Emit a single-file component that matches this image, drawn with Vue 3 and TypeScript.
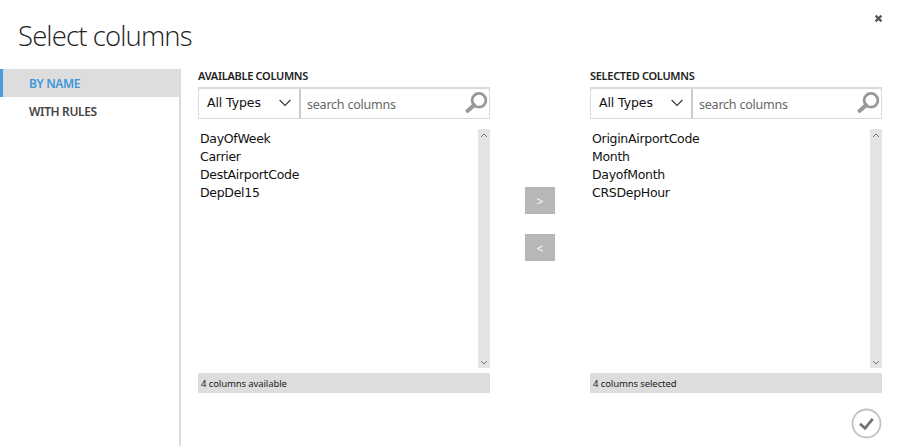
<script setup lang="ts">
import { ref } from 'vue'

interface Panel {
  id: string
  title: string
  columns: string[]
  status: string
}

const tabs: string[] = ['BY NAME', 'WITH RULES']
const activeTab = ref<string>('BY NAME')

const panels: Panel[] = [
  {
    id: 'available',
    title: 'AVAILABLE COLUMNS',
    columns: ['DayOfWeek', 'Carrier', 'DestAirportCode', 'DepDel15'],
    status: '4 columns available',
  },
  {
    id: 'selected',
    title: 'SELECTED COLUMNS',
    columns: ['OriginAirportCode', 'Month', 'DayofMonth', 'CRSDepHour'],
    status: '4 columns selected',
  },
]
</script>

<template>
  <div class="dialog">
    <header class="header">
      <h1 class="title">Select columns</h1>
      <button class="close" aria-label="Close">
        <svg width="9" height="9" viewBox="0 0 9 9"><path d="M1.6 1.6L7.4 7.4M7.4 1.6L1.6 7.4" stroke="#555" stroke-width="2.2" /></svg>
      </button>
    </header>
    <div class="body">
      <nav class="tabs">
        <button
          v-for="tab in tabs"
          :key="tab"
          class="tab"
          :class="{ active: tab === activeTab }"
          @click="activeTab = tab"
        >{{ tab }}</button>
      </nav>
      <main class="content">
        <section v-for="panel in panels" :key="panel.id" class="panel" :class="panel.id">
          <h2 class="heading"><span>{{ panel.title }}</span></h2>
          <div class="filter">
            <div class="select">
              <span>All Types</span>
              <svg width="12" height="8" viewBox="0 0 12 8"><path d="M0.6 1L6 6.4L11.4 1" fill="none" stroke="#333" stroke-width="1.1" /></svg>
            </div>
            <div class="search">
              <span>search columns</span>
              <svg width="23" height="22" viewBox="0 0 23 22">
                <circle cx="14" cy="8.3" r="6.9" fill="none" stroke="#999" stroke-width="2.8" />
                <path d="M9 13.2L2.7 18.8" stroke="#999" stroke-width="4.2" stroke-linecap="round" />
              </svg>
            </div>
          </div>
          <div class="list">
            <ul class="items">
              <li v-for="column in panel.columns" :key="column">{{ column }}</li>
            </ul>
            <div class="scrollbar">
              <svg width="8" height="5" viewBox="0 0 8 5"><path d="M1 4L4 1L7 4" fill="none" stroke="#777" stroke-width="1" /></svg>
              <svg width="8" height="5" viewBox="0 0 8 5"><path d="M1 1L4 4L7 1" fill="none" stroke="#777" stroke-width="1" /></svg>
            </div>
          </div>
          <div class="status"><span>{{ panel.status }}</span></div>
        </section>
        <div class="movers">
          <button class="mover">&gt;</button>
          <button class="mover">&lt;</button>
        </div>
      </main>
    </div>
    <button class="confirm" aria-label="Confirm">
      <svg width="31" height="31" viewBox="0 0 31 31">
        <circle cx="15.5" cy="15.5" r="14" fill="#fff" stroke="#c3c3c3" stroke-width="1.8" />
        <path d="M9 15.8L14 20.3L21.7 10.8" fill="none" stroke="#707070" stroke-width="2.7" />
      </svg>
    </button>
  </div>
</template>

<style>
body {
  margin: 0;
  background: #fff;
}
</style>

<style scoped>
.dialog {
  position: relative;
  display: flex;
  flex-direction: column;
  width: 897px;
  height: 446px;
  overflow: hidden;
  background: #fff;
  color: #222;
  font-family: "Noto Sans", "Open Sans", sans-serif;
}
button {
  margin: 0;
  padding: 0;
  border: 0;
  background: none;
  font: inherit;
}
svg {
  display: block;
  flex: none;
}
.header {
  display: flex;
  justify-content: space-between;
  height: 69px;
  box-sizing: border-box;
  padding: 14px 14px 0 18px;
}
.title {
  margin: 0;
  font-family: "Open Sans", sans-serif;
  font-size: 27.5px;
  line-height: 43px;
  font-weight: 300;
  letter-spacing: -0.87px;
  white-space: nowrap;
}
.close {
  align-self: flex-start;
}
.body {
  display: flex;
  flex: 1;
}
.tabs {
  display: flex;
  flex-direction: column;
  width: 181px;
  box-sizing: border-box;
  border-right: 2px solid #dcdcdc;
}
.tab {
  height: 28px;
  padding-left: 29px;
  color: #444;
  font-size: 12px;
  line-height: 30px;
  font-weight: 600;
  letter-spacing: -0.36px;
  text-align: left;
}
.tab.active {
  padding-left: 26px;
  border-left: 3px solid #4a9bdc;
  background: #ddd;
  color: #3f95dc;
}
.content {
  display: grid;
  grid-template-columns: 292px 100px 292px;
  padding-left: 17px;
}
.panel {
  grid-row: 1;
  display: flex;
  flex-direction: column;
  height: 325px;
}
.available {
  grid-column: 1;
}
.selected {
  grid-column: 3;
}
.heading {
  height: 18px;
  margin: 0;
  font-size: 11px;
  line-height: 13px;
  font-weight: 600;
  letter-spacing: -0.3px;
  white-space: nowrap;
}
.filter {
  display: flex;
  height: 32px;
  box-sizing: border-box;
  border: solid #d9d9d9;
  border-width: 2px 1px 1px;
}
.select {
  display: flex;
  align-items: center;
  justify-content: space-between;
  width: 102px;
  box-sizing: border-box;
  padding: 0 8px 2px 8px;
  border-right: 2px solid #ccc;
  color: #111;
  font-family: "DejaVu Sans", sans-serif;
  font-size: 12.5px;
  letter-spacing: -0.1px;
}
.search {
  display: flex;
  flex: 1;
  align-items: center;
  justify-content: space-between;
  padding: 0 1px 1px 6px;
  color: #666;
  font-size: 12.5px;
  letter-spacing: -0.22px;
}
.search span {
  padding-top: 2px;
}
.list {
  display: flex;
  justify-content: space-between;
  height: 239px;
  margin-top: 10px;
}
.items {
  margin: 0;
  padding: 1px 0 0 2px;
  list-style: none;
  color: #111;
  font-family: "DejaVu Sans", sans-serif;
  font-size: 12.5px;
  line-height: 18px;
  letter-spacing: -0.3px;
}
.scrollbar {
  display: flex;
  flex-direction: column;
  align-items: center;
  justify-content: space-between;
  width: 12px;
  box-sizing: border-box;
  padding: 4px 0 3px;
  background: #e4e4e4;
}
.status {
  height: 20px;
  margin-top: 5px;
  padding-left: 3px;
  background: #ddd;
  font-size: 9.5px;
  line-height: 22px;
  letter-spacing: -0.1px;
}
.movers {
  grid-column: 2;
  grid-row: 1;
  display: flex;
  flex-direction: column;
  align-items: center;
  gap: 20px;
  padding-top: 118px;
}
.mover {
  width: 30px;
  height: 27px;
  box-sizing: border-box;
  padding-top: 2px;
  background: #b7b7b7;
  color: #fff;
  font-size: 12px;
  line-height: 25px;
}
.confirm {
  position: absolute;
  right: 15px;
  bottom: 7px;
}
</style>
